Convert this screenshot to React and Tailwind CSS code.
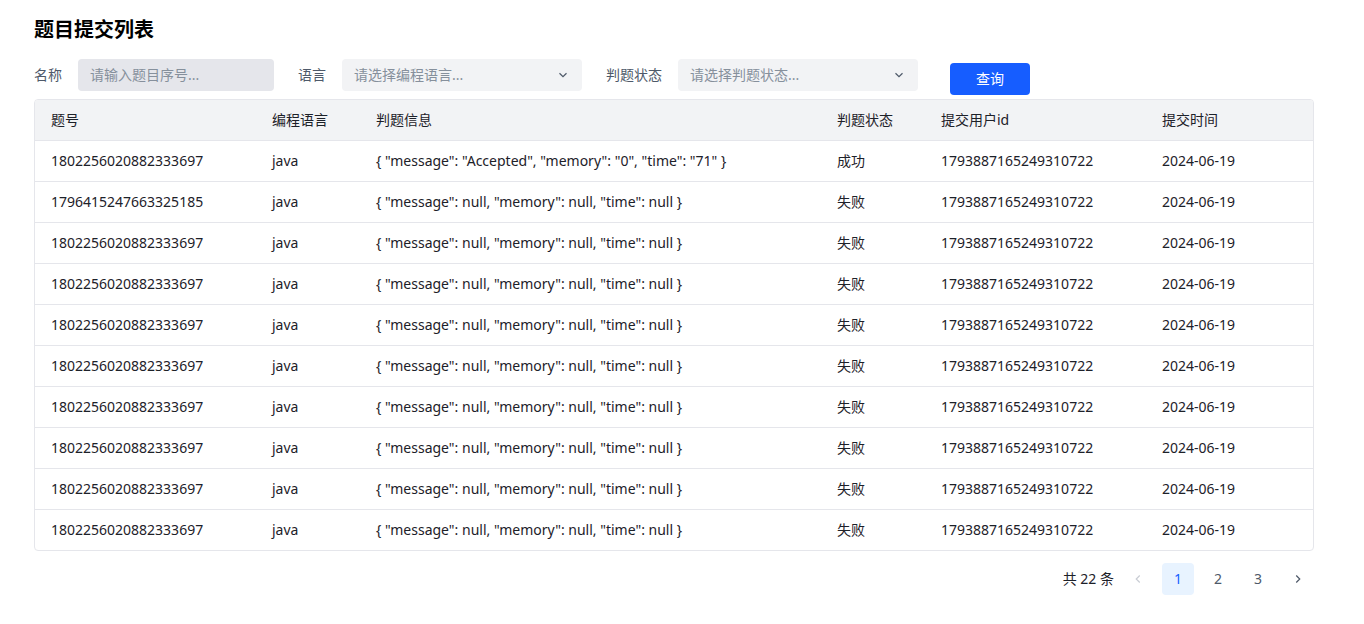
import React from "react";

const font = { fontFamily: '"Noto Sans", "Noto Sans CJK SC", sans-serif' };

const nullInfo = '{ "message": null, "memory": null, "time": null }';

const rows = [
  { id: "1802256020882333697", info: '{ "message": "Accepted", "memory": "0", "time": "71" }', status: "成功" },
  { id: "1796415247663325185", info: nullInfo, status: "失败" },
  ...Array.from({ length: 8 }, () => ({ id: "1802256020882333697", info: nullInfo, status: "失败" })),
];

const Chevron = ({ dir = "down", className = "" }) => {
  const d = {
    down: "M4 6l4 4 4-4",
    left: "M10 4L6 8l4 4",
    right: "M6 4l4 4-4 4",
  }[dir];
  return (
    <svg viewBox="0 0 16 16" className={className} fill="none" stroke="currentColor" strokeWidth="1.4">
      <path d={d} />
    </svg>
  );
};

const Select = ({ placeholder }) => (
  <div className="flex h-8 w-[240px] items-center justify-between rounded-sm bg-[#f2f3f5] pl-3 pr-3 text-sm text-[#86909c]">
    <span>{placeholder}</span>
    <Chevron className="h-3.5 w-3.5 text-[#4e5969]" />
  </div>
);

export default function App() {
  const cols = "grid grid-cols-[221px_104px_461px_104px_221px_1fr]";
  return (
    <div className="min-h-screen bg-white pl-[34px] pr-[50px] text-[#1d2129]" style={font}>
      {/* title */}
      <h1 className="pt-[15px] text-[20px] font-bold leading-[30px] text-black">题目提交列表</h1>

      {/* filters */}
      <div className="mt-[14px] flex items-start">
        <div className="flex h-8 items-center">
          <span className="w-[44px] text-sm text-[#4e5969]">名称</span>
          <div className="flex h-8 w-[196px] items-center rounded-sm bg-[#e5e6eb] px-3 text-sm text-[#86909c]">
            请输入题目序号...
          </div>
        </div>
        <div className="ml-6 flex h-8 items-center">
          <span className="w-[44px] text-sm text-[#4e5969]">语言</span>
          <Select placeholder="请选择编程语言..." />
        </div>
        <div className="ml-6 flex h-8 items-center">
          <span className="w-[72px] text-sm text-[#4e5969]">判题状态</span>
          <Select placeholder="请选择判题状态..." />
        </div>
        <button className="ml-8 mt-1 h-8 w-20 rounded-sm bg-[#165dff] text-sm text-white">查询</button>
      </div>

      {/* table */}
      <div className="mt-1 overflow-hidden rounded-sm border border-[#e5e6eb] text-sm">
        <div className={`${cols} h-10 items-center bg-[#f2f3f5]`}>
          {["题号", "编程语言", "判题信息", "判题状态", "提交用户id", "提交时间"].map((h) => (
            <div key={h} className="px-4">{h}</div>
          ))}
        </div>
        {rows.map((r, i) => (
          <div key={i} className={`${cols} h-[41px] items-center border-t border-[#e5e6eb]`}>
            <div className="px-4">{r.id}</div>
            <div className="px-4">java</div>
            <div className="px-4">{r.info}</div>
            <div className="px-4">{r.status}</div>
            <div className="px-4">1793887165249310722</div>
            <div className="px-4">2024-06-19</div>
          </div>
        ))}
      </div>

      {/* pagination */}
      <div className="mt-3 flex items-center justify-end gap-2 text-sm">
        <span className="text-[#1d2129]">共 22 条</span>
        <div className="flex h-8 w-8 items-center justify-center text-[#c9cdd4]">
          <Chevron dir="left" className="h-3.5 w-3.5" />
        </div>
        <div className="flex h-8 w-8 items-center justify-center rounded-sm bg-[#e8f3ff] text-[#165dff]">1</div>
        <div className="flex h-8 w-8 items-center justify-center text-[#4e5969]">2</div>
        <div className="flex h-8 w-8 items-center justify-center text-[#4e5969]">3</div>
        <div className="flex h-8 w-8 items-center justify-center text-[#4e5969]">
          <Chevron dir="right" className="h-3.5 w-3.5" />
        </div>
      </div>
    </div>
  );
}
